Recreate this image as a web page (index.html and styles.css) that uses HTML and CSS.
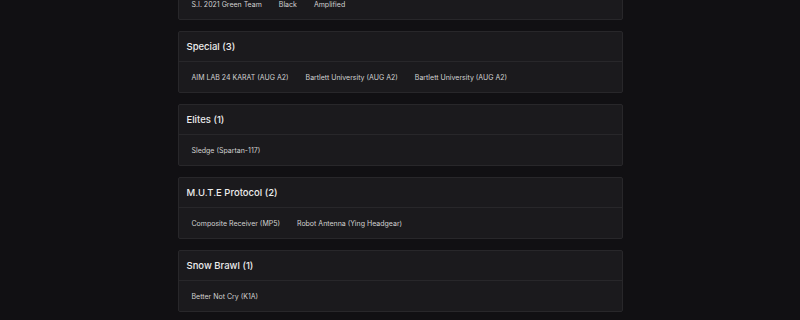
FILE: index.html
```html
<!DOCTYPE html>
<html lang="en">
<head>
  <meta charset="UTF-8" />
  <meta name="viewport" content="width=device-width, initial-scale=1.0" />
  <title>Collections</title>
  <link rel="stylesheet" href="styles.css">
</head>
<body>
  <div class="list">
    <div class="card">
      <div class="card-head">Team (3)</div>
      <div class="card-body">
        <span class="item">S.I. 2021 Green Team</span>
        <span class="item">Black</span>
        <span class="item">Amplified</span>
      </div>
    </div>

    <div class="card">
      <div class="card-head">Special (3)</div>
      <div class="card-body">
        <span class="item">AIM LAB 24 KARAT (AUG A2)</span>
        <span class="item">Bartlett University (AUG A2)</span>
        <span class="item">Bartlett University (AUG A2)</span>
      </div>
    </div>

    <div class="card">
      <div class="card-head">Elites (1)</div>
      <div class="card-body">
        <span class="item">Sledge (Spartan-117)</span>
      </div>
    </div>

    <div class="card">
      <div class="card-head">M.U.T.E Protocol (2)</div>
      <div class="card-body">
        <span class="item">Composite Receiver (MP5)</span>
        <span class="item">Robot Antenna (Ying Headgear)</span>
      </div>
    </div>

    <div class="card">
      <div class="card-head">Snow Brawl (1)</div>
      <div class="card-body">
        <span class="item">Better Not Cry (K1A)</span>
      </div>
    </div>
  </div>
</body>
</html>
```

FILE: styles.css
```css
:root {
  --bg: #111013;
  --card: #1b1a1d;
  --line: #28272a;
  --head: #ececec;
  --text: #d2d2d2;
}

body {
  margin: 0;
  background: var(--bg);
  font-family: 'Inter', 'Noto Sans', sans-serif;
}

.list {
  width: 445px;
  margin: -42px auto 0;
  display: flex;
  flex-direction: column;
  gap: 11px;
}

.card {
  background: var(--card);
  border: 1px solid var(--line);
  border-radius: 2px;
}

.card-head {
  height: 29px;
  display: flex;
  align-items: center;
  padding-left: 8px;
  font-size: 9.5px;
  font-weight: 500;
  color: var(--head);
  border-bottom: 1px solid var(--line);
}

.card-body {
  height: 28px;
  padding: 2px 0 0 13px;
  display: flex;
  align-items: center;
  gap: 17px;
}

.item {
  font-size: 7px;
  line-height: 1.2;
  color: var(--text);
}
```
